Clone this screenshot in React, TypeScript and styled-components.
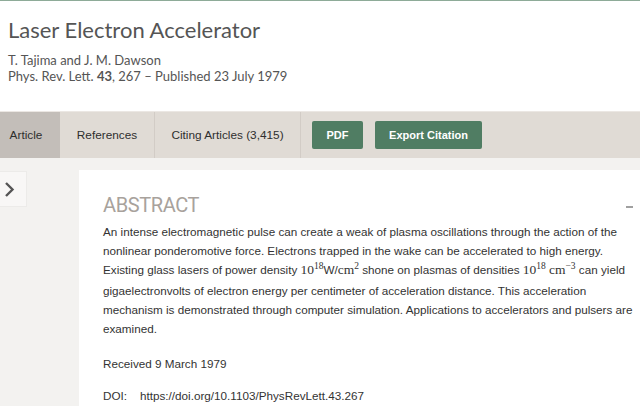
import React from 'react';
import styled, { createGlobalStyle } from 'styled-components';

const GlobalStyle = createGlobalStyle`
    html, body {
        margin: 0;
        padding: 0;
        background: #ffffff;
    }
    body {
        font-family: "Liberation Sans", Arial, sans-serif;
        color: #333333;
    }
`;

const Page = styled.div`
    width: 640px;
    height: 406px;
    overflow: hidden;
    border-top: 1px solid #8eab98;
    box-sizing: border-box;
    display: flex;
    flex-direction: column;
`;

const Header = styled.header`
    flex-shrink: 0;
    padding: 15px 8px 0 8px;
    height: 110px;
    box-sizing: border-box;
    font-family: "Lato", "Open Sans", sans-serif;
    color: #555555;
`;

const Title = styled.h1`
    margin: 0;
    font-size: 22px;
    font-weight: 400;
    line-height: 28px;
    color: #555555;
`;

const Meta = styled.div`
    margin-top: 8px;
    font-size: 13px;
    line-height: 16px;
`;

const TabBar = styled.nav`
    flex-shrink: 0;
    display: flex;
    align-items: stretch;
    height: 47px;
    background: #e0dbd5;
    border-top: 1px solid #ebe7e3;
    box-sizing: border-box;
`;

const Tab = styled.div<{ $active?: boolean; $width: number; $divider?: boolean }>`
    width: ${(p) => p.$width}px;
    display: flex;
    align-items: center;
    justify-content: center;
    font-size: 11.8px;
    color: #2e2e2e;
    background: ${(p) => (p.$active ? '#c3beb9' : 'transparent')};
    border-right: ${(p) => (p.$divider ? '1px solid #d2ccc6' : 'none')};
    box-sizing: border-box;
`;

const Buttons = styled.div`
    display: flex;
    align-items: center;
    gap: 12px;
    padding-left: 11px;
`;

const Button = styled.button<{ $width: number }>`
    width: ${(p) => p.$width}px;
    height: 28px;
    border: none;
    border-radius: 2px;
    background: #507d63;
    color: #ffffff;
    font-family: "Liberation Sans", Arial, sans-serif;
    font-weight: 700;
    font-size: 11px;
    padding: 0;
`;

const Body = styled.div`
    flex: 1;
    background: #f3f2f0;
    display: flex;
    align-items: flex-start;
    padding-top: 12px;
`;

const Toggle = styled.div`
    flex-shrink: 0;
    width: 27px;
    height: 36px;
    background: #f8f7f6;
    border: 1px solid #ecebe9;
    border-left: none;
    box-sizing: border-box;
    display: flex;
    align-items: center;
    justify-content: center;
    padding-right: 8px;
    margin-top: 1px;
`;

const Card = styled.section`
    flex: 1;
    margin-left: 52px;
    background: #ffffff;
    padding: 23px 7px 0 24px;
    min-height: 300px;
`;

const SectionHead = styled.div`
    display: flex;
    justify-content: space-between;
    align-items: center;
`;

const SectionTitle = styled.h2`
    margin: 0;
    font-family: "Roboto", "Lato", sans-serif;
    font-weight: 400;
    font-size: 20px;
    line-height: 24px;
    letter-spacing: -0.4px;
    color: #a8a29c;
`;

const Collapse = styled.span`
    display: block;
    width: 7px;
    height: 2px;
    background: #a0a0a0;
    margin-top: 3px;
`;

const Paragraph = styled.p`
    margin: 5px 0 0 0;
    width: 530px;
    font-size: 11.7px;
    line-height: 19px;
    color: #333333;
`;

const Math = styled.span`
    font-family: "Liberation Serif", "DejaVu Serif", serif;
    font-size: 13.5px;
`;

const Sup = styled.span`
    font-family: "Liberation Serif", "DejaVu Serif", serif;
    font-size: 9.5px;
    position: relative;
    top: -5px;
`;

const Line = styled.p`
    margin: 0;
    font-size: 11.7px;
    line-height: 19px;
    color: #333333;
`;

const Received = styled(Line)`
    margin-top: 16px;
`;

const Doi = styled(Line)`
    margin-top: 13px;
    display: flex;
    gap: 13px;
`;

export default function App(): JSX.Element {
    return (
        <>
            <GlobalStyle />
            <Page>
                <Header>
                    <Title>Laser Electron Accelerator</Title>
                    <Meta>
                        T. Tajima and J. M. Dawson
                        <br />
                        Phys. Rev. Lett. <b>43</b>, 267 – Published 23 July 1979
                    </Meta>
                </Header>
                <TabBar>
                    <Tab $active $width={60} style={{ paddingRight: 8 }}>
                        Article
                    </Tab>
                    <Tab $width={95} $divider>
                        References
                    </Tab>
                    <Tab $width={146} $divider>
                        Citing Articles (3,415)
                    </Tab>
                    <Buttons>
                        <Button $width={51}>PDF</Button>
                        <Button $width={107}>Export Citation</Button>
                    </Buttons>
                </TabBar>
                <Body>
                    <Toggle>
                        <svg width="11" height="17" viewBox="0 0 11 17">
                            <path d="M2 2l6.5 6.5L2 15" fill="none" stroke="#555" strokeWidth="2.4" />
                        </svg>
                    </Toggle>
                    <Card>
                        <SectionHead>
                            <SectionTitle>ABSTRACT</SectionTitle>
                            <Collapse />
                        </SectionHead>
                        <Paragraph>
                            An intense electromagnetic pulse can create a weak of plasma oscillations through the
                            action of the nonlinear ponderomotive force. Electrons trapped in the wake can be
                            accelerated to high energy. Existing glass lasers of power density{' '}
                            <Math>10</Math>
                            <Sup>18</Sup>W/<Math>cm</Math>
                            <Sup>2</Sup> shone on plasmas of densities <Math>10</Math>
                            <Sup>18</Sup> <Math>cm</Math>
                            <Sup>−3</Sup> can yield gigaelectronvolts of electron energy per centimeter of
                            acceleration distance. This acceleration mechanism is demonstrated through computer
                            simulation. Applications to accelerators and pulsers are examined.
                        </Paragraph>
                        <Received>Received 9 March 1979</Received>
                        <Doi>
                            <span>DOI:</span>
                            <span>https://doi.org/10.1103/PhysRevLett.43.267</span>
                        </Doi>
                    </Card>
                </Body>
            </Page>
        </>
    );
}
